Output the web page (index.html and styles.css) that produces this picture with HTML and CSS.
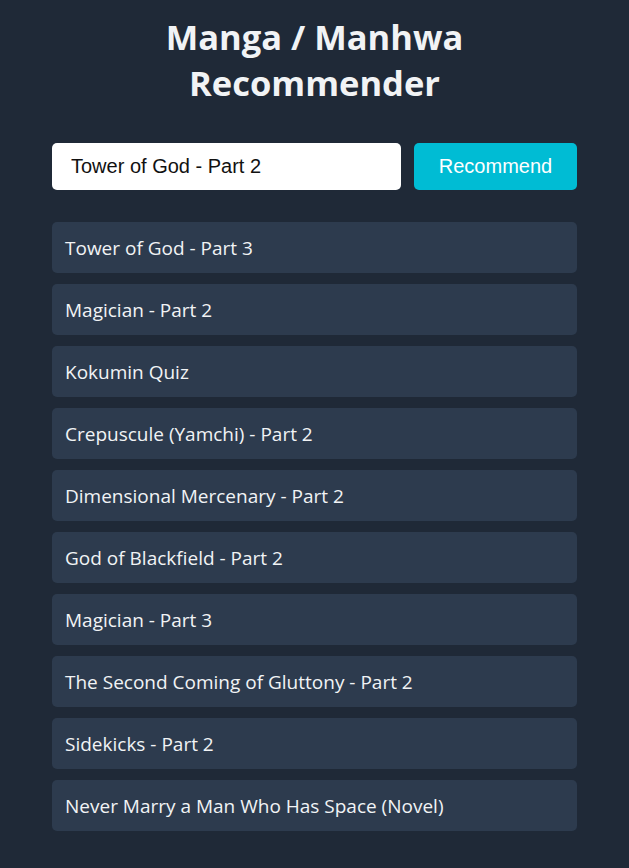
FILE: index.html
```html
<!DOCTYPE html>
<html lang="en">
<head>
<meta charset="utf-8">
<title>Manga / Manhwa Recommender</title>
<link rel="stylesheet" href="styles.css">
</head>
<body>
<main class="app">
  <h1 class="title">Manga / Manhwa Recommender</h1>
  <form class="search">
    <input class="search-input" type="text" value="Tower of God - Part 2">
    <button class="search-btn" type="button">Recommend</button>
  </form>
  <ul class="results">
    <li class="result">Tower of God - Part 3</li>
    <li class="result">Magician - Part 2</li>
    <li class="result">Kokumin Quiz</li>
    <li class="result">Crepuscule (Yamchi) - Part 2</li>
    <li class="result">Dimensional Mercenary - Part 2</li>
    <li class="result">God of Blackfield - Part 2</li>
    <li class="result">Magician - Part 3</li>
    <li class="result">The Second Coming of Gluttony - Part 2</li>
    <li class="result">Sidekicks - Part 2</li>
    <li class="result">Never Marry a Man Who Has Space (Novel)</li>
  </ul>
</main>
</body>
</html>
```
FILE: styles.css
```css
html, body {
  margin: 0;
  padding: 0;
  background: #1f2937;
}
body {
  font-family: "Open Sans", "Noto Sans", sans-serif;
  color: #f1f3f5;
}
.app {
  width: 525px;
  margin: 0 auto;
  padding-top: 14px;
}
.title {
  margin: 0 0 37px;
  text-align: center;
  font-size: 34.5px;
  line-height: 46px;
  font-weight: 700;
  padding: 0 80px;
}
.search {
  display: flex;
  gap: 13px;
  margin: 0 0 32px;
}
.search-input {
  flex: 1;
  height: 47px;
  box-sizing: border-box;
  border: none;
  border-radius: 5px;
  background: #ffffff;
  padding: 0 19px;
  font-family: "Liberation Sans", Arial, sans-serif;
  font-size: 20px;
  color: #111;
  outline: none;
}
.search-btn {
  width: 163px;
  height: 47px;
  border: none;
  border-radius: 5px;
  background: #00bcd4;
  color: #ffffff;
  font-family: "Liberation Sans", Arial, sans-serif;
  font-size: 20px;
}
.results {
  list-style: none;
  margin: 0;
  padding: 0;
  display: flex;
  flex-direction: column;
  gap: 11px;
}
.result {
  height: 51px;
  display: flex;
  align-items: center;
  padding: 0 13px;
  background: #2d3b4e;
  border-radius: 5px;
  font-size: 19px;
}
```
